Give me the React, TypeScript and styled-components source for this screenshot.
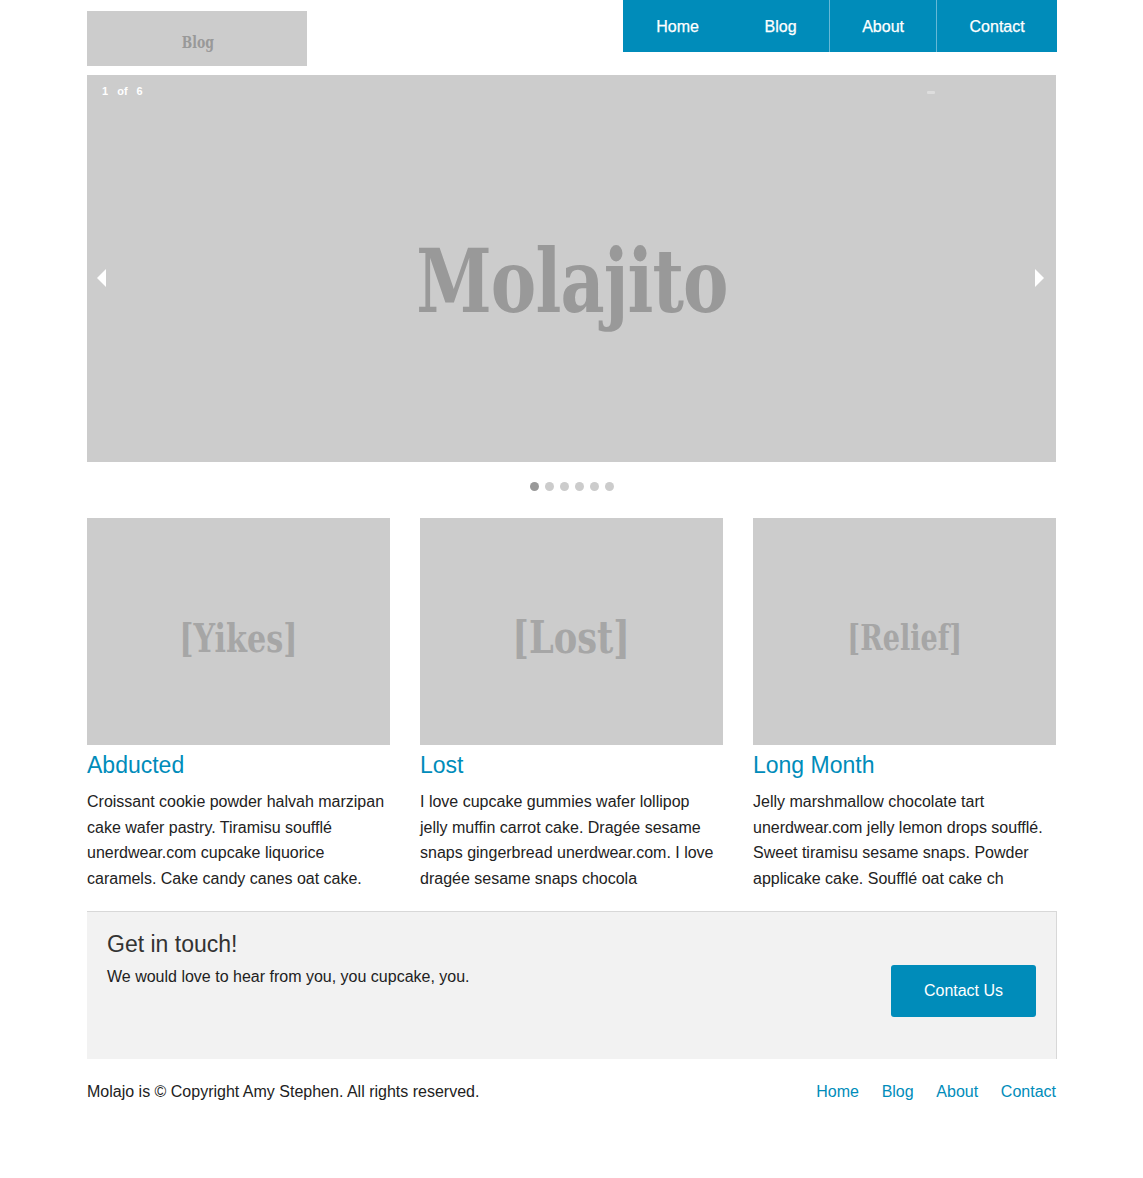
import React from "react";
import styled, { createGlobalStyle } from "styled-components";

const GlobalStyle = createGlobalStyle`
  html, body { margin: 0; padding: 0; background: #fff; }
  body {
    font-family: "Liberation Sans", Arial, Helvetica, sans-serif;
    color: #222;
    font-size: 16px;
  }
  * { box-sizing: border-box; }
`;

const BLUE = "#008cba";
const SLAB = `"DejaVu Serif Condensed", "DejaVu Serif", serif`;

const Page = styled.div`
  width: 969px;
  margin: 0 auto;
  padding-bottom: 60px;
`;

const Header = styled.header`
  display: flex;
  justify-content: space-between;
  align-items: flex-start;
  height: 75px;
`;

const Logo = styled.div`
  margin-top: 11px;
  width: 220px;
  height: 55px;
  background: #ccc;
  color: #999;
  font-family: ${SLAB};
  font-stretch: condensed;
  font-weight: bold;
  font-size: 17px;
  display: flex;
  align-items: center;
  justify-content: center;
  padding: 6px 0 0 2px;
`;

const Squeezed = styled.span<{ $scale?: number }>`
  display: inline-block;
  transform: scaleX(${(p) => p.$scale ?? 0.86});
`;

const Nav = styled.nav`
  display: flex;
  height: 52px;
  background: ${BLUE};
  margin-right: -1px;
`;

const NavItem = styled.a<{ $divider?: boolean }>`
  display: flex;
  align-items: center;
  padding: 2px 32.3px 0;
  color: #fff;
  font-size: 16px;
  text-decoration: none;
  -webkit-text-stroke: 0.25px #fff;
  border-left: 1px solid ${(p) => (p.$divider ? "#66b8d6" : "transparent")};
`;

const Slider = styled.section`
  position: relative;
  height: 387px;
  background: #ccc;
  display: flex;
  align-items: center;
  justify-content: center;
`;

const Counter = styled.div`
  position: absolute;
  left: 15px;
  top: 10px;
  color: #fff;
  font-size: 11px;
  font-weight: bold;
  word-spacing: 6px;
`;

const PauseMark = styled.div`
  position: absolute;
  left: 840px;
  top: 16px;
  width: 8px;
  height: 3px;
  background: #ddd;
  border-radius: 1px;
`;

const HeroText = styled.div`
  color: #999;
  font-family: ${SLAB};
  font-stretch: condensed;
  font-weight: bold;
  font-size: 88px;
  margin-top: 24px;
  letter-spacing: -1px;
`;

const Arrow = styled.div<{ $side: "left" | "right" }>`
  position: absolute;
  top: 194px;
  ${(p) => (p.$side === "left" ? "left: 10px;" : "right: 12px;")}
  width: 0;
  height: 0;
  border-top: 9px solid transparent;
  border-bottom: 9px solid transparent;
  ${(p) =>
    p.$side === "left"
      ? "border-right: 9px solid #fff;"
      : "border-left: 9px solid #fff;"}
`;

const Dots = styled.div`
  display: flex;
  justify-content: center;
  gap: 6px;
  padding: 20px 0 27px;
`;

const Dot = styled.span<{ $active?: boolean }>`
  width: 9px;
  height: 9px;
  border-radius: 50%;
  background: ${(p) => (p.$active ? "#999" : "#ccc")};
`;

const Cards = styled.div`
  display: grid;
  grid-template-columns: repeat(3, 1fr);
  column-gap: 30px;
`;

const Card = styled.article``;

const CardImage = styled.div`
  height: 227px;
  background: #ccc;
  color: #a6a6a6;
  font-family: ${SLAB};
  font-stretch: condensed;
  font-weight: bold;
  display: flex;
  align-items: center;
  justify-content: center;
  padding-top: 12px;
`;

const ImageLabel = styled(Squeezed)<{ $size: number }>`
  font-size: ${(p) => p.$size}px;
`;

const CardTitle = styled.h4`
  margin: 4px 0 8px;
  font-size: 23px;
  font-weight: normal;
  line-height: 32px;
  color: ${BLUE};
`;

const Text = styled.p`
  margin: 0;
  font-size: 16px;
  line-height: 25.6px;
  color: #222;
`;

const CardText = styled(Text)`
  max-width: 299px;
`;

const Panel = styled.section`
  margin-top: 20px;
  background: #f2f2f2;
  border-top: 1px solid #d8d8d8;
  border-right: 1px solid #d8d8d8;
  padding: 20px;
  display: flex;
  justify-content: space-between;
  align-items: flex-start;
  margin-right: -1px;
`;

const PanelTitle = styled.h4`
  margin: 0 0 8px;
  font-size: 23px;
  font-weight: normal;
  line-height: 24px;
  color: #333;
`;

const Button = styled.a`
  display: inline-block;
  margin: 33px 0 22px;
  width: 145px;
  height: 52px;
  line-height: 52px;
  text-align: center;
  background: ${BLUE};
  color: #fff;
  border-radius: 3px;
  font-size: 16px;
  text-decoration: none;
`;

const Footer = styled.footer`
  margin-top: 20px;
  display: flex;
  justify-content: space-between;
  align-items: center;
`;

const FooterLinks = styled.nav`
  display: flex;
  gap: 22.7px;
`;

const FooterLink = styled.a`
  color: ${BLUE};
  font-size: 16px;
  line-height: 25.6px;
  text-decoration: none;
`;

const cards = [
  {
    label: "[Yikes]",
    size: 40,
    scale: 0.84,
    title: "Abducted",
    text: "Croissant cookie powder halvah marzipan cake wafer pastry. Tiramisu soufflé unerdwear.com cupcake liquorice caramels. Cake candy canes oat cake.",
  },
  {
    label: "[Lost]",
    size: 44,
    scale: 0.89,
    title: "Lost",
    text: "I love cupcake gummies wafer lollipop jelly muffin carrot cake. Dragée sesame snaps gingerbread unerdwear.com. I love dragée sesame snaps chocola",
  },
  {
    label: "[Relief]",
    size: 35,
    scale: 0.86,
    title: "Long Month",
    text: "Jelly marshmallow chocolate tart unerdwear.com jelly lemon drops soufflé. Sweet tiramisu sesame snaps. Powder applicake cake. Soufflé oat cake ch",
  },
];

const navItems = ["Home", "Blog", "About", "Contact"];

export default function App() {
  return (
    <>
      <GlobalStyle />
      <Page>
        <Header>
          <Logo>
            <Squeezed $scale={0.81}>Blog</Squeezed>
          </Logo>
          <Nav>
            {navItems.map((n, i) => (
              <NavItem key={n} href="#" $divider={i >= 2}>
                {n}
              </NavItem>
            ))}
          </Nav>
        </Header>
        <Slider>
          <Counter>1 of 6</Counter>
          <PauseMark />
          <Arrow $side="left" />
          <HeroText>
            <Squeezed $scale={0.86}>Molajito</Squeezed>
          </HeroText>
          <Arrow $side="right" />
        </Slider>
        <Dots>
          {[0, 1, 2, 3, 4, 5].map((i) => (
            <Dot key={i} $active={i === 0} />
          ))}
        </Dots>
        <Cards>
          {cards.map((c) => (
            <Card key={c.title}>
              <CardImage>
                <ImageLabel $size={c.size} $scale={c.scale}>
                  {c.label}
                </ImageLabel>
              </CardImage>
              <CardTitle>{c.title}</CardTitle>
              <CardText>{c.text}</CardText>
            </Card>
          ))}
        </Cards>
        <Panel>
          <div>
            <PanelTitle>Get in touch!</PanelTitle>
            <Text>We would love to hear from you, you cupcake, you.</Text>
          </div>
          <Button href="#">Contact Us</Button>
        </Panel>
        <Footer>
          <Text>Molajo is © Copyright Amy Stephen. All rights reserved.</Text>
          <FooterLinks>
            {navItems.map((n) => (
              <FooterLink key={n} href="#">
                {n}
              </FooterLink>
            ))}
          </FooterLinks>
        </Footer>
      </Page>
    </>
  );
}
